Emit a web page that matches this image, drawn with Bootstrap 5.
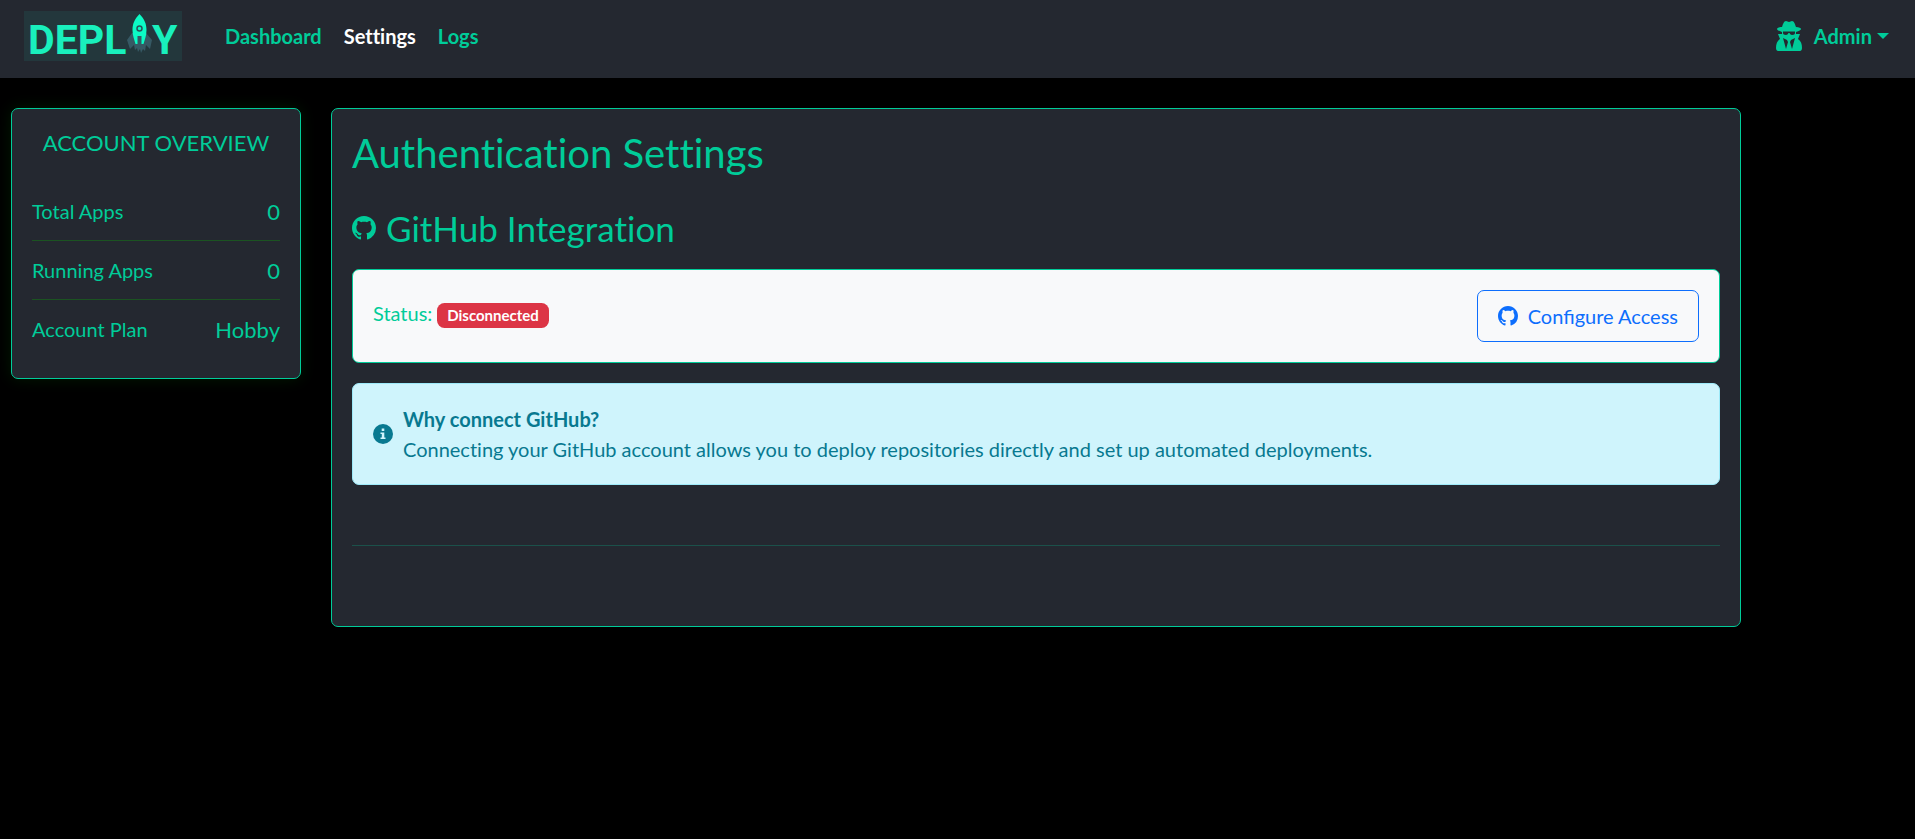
<!DOCTYPE html>
<html lang="en">
<head>
<meta charset="utf-8">
<meta name="viewport" content="width=device-width, initial-scale=1">
<title>Deploy - Authentication Settings</title>
<link href="https://cdn.jsdelivr.net/npm/bootstrap@5.3.0/dist/css/bootstrap.min.css" rel="stylesheet">
<style>
  :root { --accent: #00cc99; --panel: #242830; }
  html { font-size: 20px; }
  body { background: #000; color: var(--accent); font-family: Lato, "Open Sans", sans-serif; font-variant-ligatures: none; }
  .topbar { background: var(--panel); min-height: 78px; padding: 0 24px 6px; }
  .topbar .navbar-brand { margin: 0 33px 0 0; padding: 0; }
  .topbar .navbar-brand svg { overflow: visible; }
  .topbar .navbar-nav { gap: 2px; }
  .topbar .nav-link, .topbar .nav-link:hover { color: var(--accent); font-weight: 700; padding: 0 10px; }
  .topbar .nav-link.active { color: #fff; }
  .topbar .account { margin-right: -8px; }
  .page-body { padding: 30px 14px 0 11px; }
  .page-body > .row { --bs-gutter-x: 30px; }
  .panel { --bs-card-bg: var(--panel); --bs-card-color: var(--accent); --bs-card-border-color: var(--accent); --bs-card-border-radius: 7px; --bs-card-inner-border-radius: 6px; }
  .overview { box-shadow: 0 0 15px rgba(0, 255, 0, .1); }
  .overview-title { font-size: 22px; line-height: 27px; margin-bottom: 26px; }
  .stat { height: 59px; border-bottom: 1px solid #1b5321; }
  .stat:last-child { height: 58px; border-bottom: 0; }
  .stat dt { font-weight: 400; }
  .stat dd { font-size: 22px; margin: 0; }
  .status-card { --bs-card-bg: #f8f9fa; }
  .status-line { padding-top: 8px; }
  .configure { padding: 10px 20px; --bs-btn-border-radius: 7px; }
  .info-note { background: #cff4fc; border-color: #9eeaf9; color: #087990; border-radius: 7px; }
</style>
</head>
<body>
<nav class="navbar topbar navbar-expand" aria-label="Main">
  <a class="navbar-brand" href="#" aria-label="Deploy home">
    <svg class="d-block" width="158" height="50" viewBox="0 0 158 50" aria-hidden="true">
      <rect width="158" height="50" fill="#23373c"/>
      <g fill="#19f0bd" font-family="Roboto, sans-serif" font-weight="700" font-size="41">
        <text x="4" y="43">DEPL</text>
        <text x="128" y="43">Y</text>
      </g>
      <path fill="#365964" d="M108 22l-5 7 3 9 4-4 1 5 2-2 1 4 2-3 1 4 2-4 2 2 1-6 4 4 2-9-6-7z"/>
      <path fill="#0cfbc5" d="M115.500 3c5 5 7 10 7 16 0 6-2 10-3 14h-2v-8h-4v8h-2c-1-4-3-8-3-14 0-6 2-11 7-16z"/>
      <circle cx="115.500" cy="17.500" r="2.500" fill="#0cfbc5" stroke="#28535a" stroke-width="1.500"/>
    </svg>
  </a>
  <div class="navbar-nav me-auto">
    <a class="nav-link" href="#">Dashboard</a>
    <a class="nav-link active" aria-current="page" href="#">Settings</a>
    <a class="nav-link" href="#">Logs</a>
  </div>
  <div class="navbar-nav dropdown account">
    <a class="nav-link dropdown-toggle d-flex align-items-center" href="#" role="button" data-bs-toggle="dropdown" aria-expanded="false">
      <svg class="me-2" width="30" height="30" viewBox="0 0 30 30" fill="currentColor" aria-hidden="true">
        <path d="M8 6c1-3 2-6 4-6 1 0 2 1 3 1s2-1 3-1c2 0 3 3 4 6 3 0 5 1 5 2s-2 2-5 3v2h4l-2 5c3 2 4 5 4 9 0 2-1 3-2 3H4c-1 0-2-1-2-3 0-4 1-7 4-9l-2-5h4v-2C5 10 3 9 3 8s2-2 5-2z"/>
        <path fill="#242830" d="M9 10.500h12v1.500c0 1-1 2-3 2-1 0-2-1-2.500-2h-1c-.5 1-1.500 2-2.500 2-2 0-3-1-3-2z"/>
        <path fill="#242830" d="M9 17l4 2 1 2-2 7zM21 17l-4 2-1 2 2 7z"/>
      </svg>
      Admin
    </a>
    <ul class="dropdown-menu dropdown-menu-end"><li><a class="dropdown-item" href="#">Log out</a></li></ul>
  </div>
</nav>

<svg class="d-none" aria-hidden="true">
  <symbol id="github" viewBox="0 0 16 16"><path d="M8 0C3.580 0 0 3.580 0 8c0 3.540 2.290 6.530 5.470 7.590.4.070.55-.17.55-.38 0-.19-.01-.82-.01-1.490-2.010.37-2.530-.49-2.690-.94-.09-.23-.48-.94-.82-1.130-.28-.15-.68-.52-.01-.53.63-.01 1.080.58 1.230.82.72 1.210 1.870.87 2.330.66.07-.52.28-.87.51-1.070-1.780-.2-3.640-.89-3.640-3.950 0-.87.31-1.590.82-2.150-.08-.2-.36-1.020.08-2.120 0 0 .67-.21 2.200.82.64-.18 1.320-.27 2-.27s1.360.09 2 .27c1.530-1.040 2.200-.82 2.200-.82.44 1.100.16 1.920.08 2.120.51.56.82 1.270.82 2.150 0 3.070-1.870 3.750-3.650 3.950.29.25.54.73.54 1.480 0 1.070-.01 1.930-.01 2.200 0 .21.15.46.55.38A8.010 8.010 0 0 0 16 8c0-4.420-3.580-8-8-8z"/></symbol>
</svg>

<main class="container-fluid page-body">
  <div class="row align-items-start">
    <aside class="col-2">
      <div class="card panel overview">
        <div class="card-body">
          <h2 class="overview-title text-center text-uppercase fw-normal">Account Overview</h2>
          <dl class="mb-0">
            <div class="stat d-flex justify-content-between align-items-center"><dt>Total Apps</dt><dd>0</dd></div>
            <div class="stat d-flex justify-content-between align-items-center"><dt>Running Apps</dt><dd>0</dd></div>
            <div class="stat d-flex justify-content-between align-items-center"><dt>Account Plan</dt><dd>Hobby</dd></div>
          </dl>
        </div>
      </div>
    </aside>
    <section class="col-9">
      <div class="card panel">
        <div class="card-body">
          <h1 class="h2 fw-normal mb-4">Authentication Settings</h1>
          <h2 class="h3 fw-normal mb-3 d-flex align-items-center">
            <svg class="me-2" width="24" height="24" fill="currentColor" aria-hidden="true"><use href="#github"/></svg>GitHub Integration
          </h2>
          <div class="card panel status-card mb-3">
            <div class="card-body d-flex justify-content-between align-items-start">
              <p class="status-line mb-0">Status: <span class="badge text-bg-danger">Disconnected</span></p>
              <button type="button" class="btn btn-outline-primary configure d-flex align-items-center">
                <svg class="me-2" width="20" height="20" fill="currentColor" aria-hidden="true"><use href="#github"/></svg>Configure Access
              </button>
            </div>
          </div>
          <div class="alert info-note d-flex align-items-center mb-0" role="note">
            <svg class="me-2 flex-shrink-0" width="20" height="20" viewBox="0 0 20 20" aria-hidden="true">
              <circle cx="10" cy="10" r="10" fill="currentColor"/>
              <path fill="#cff4fc" d="M8.700 4.600h2.600v2.400H8.700zM7.500 8.400h3.800v5h1.200V15h-5v-1.600h1.300V10H7.500z"/>
            </svg>
            <div><strong>Why connect GitHub?</strong><br>Connecting your GitHub account allows you to deploy repositories directly and set up automated deployments.</div>
          </div>
          <hr class="my-5">
        </div>
      </div>
    </section>
  </div>
</main>
<script src="https://cdn.jsdelivr.net/npm/bootstrap@5.3.0/dist/js/bootstrap.bundle.min.js"></script>
</body>
</html>
